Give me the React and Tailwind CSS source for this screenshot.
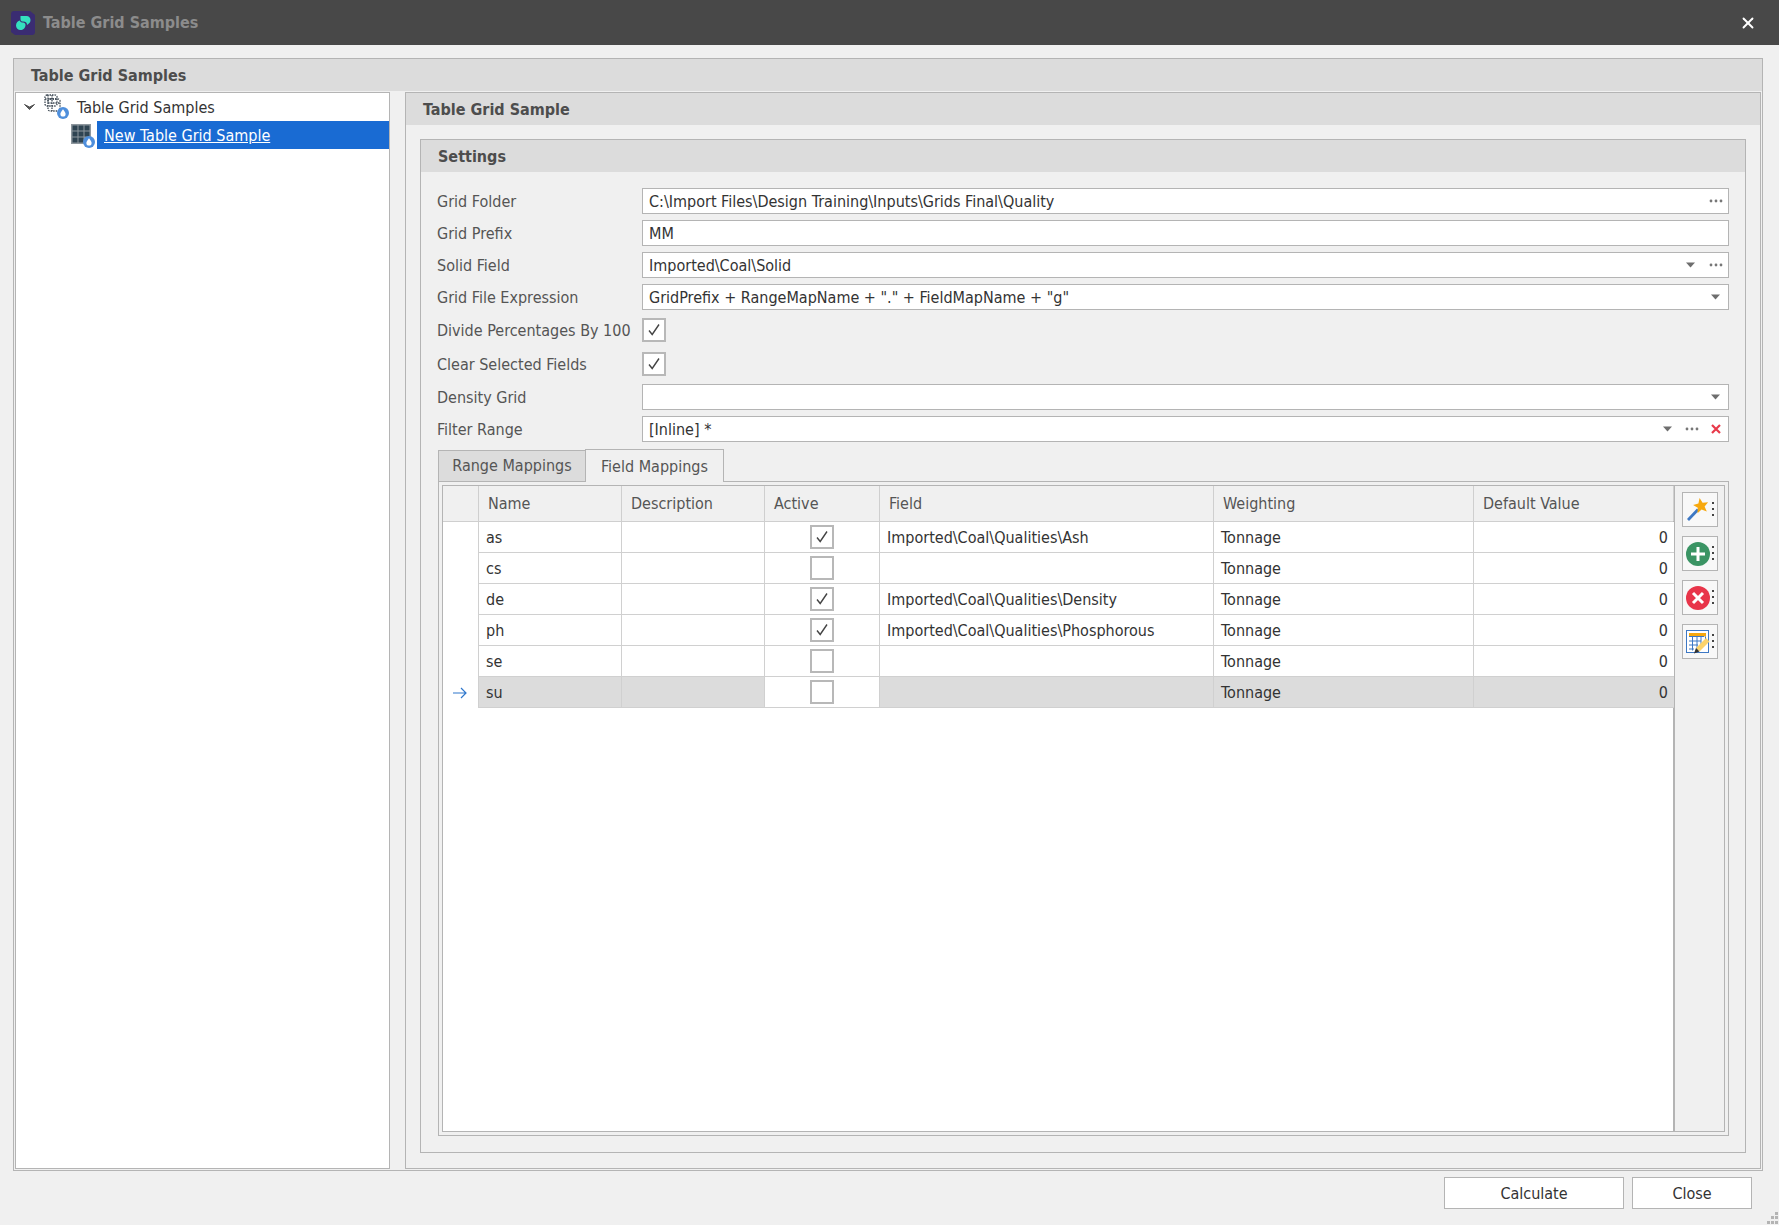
import { X } from "lucide-react"

const font = "font-['DejaVu_Sans_Condensed','DejaVu_Sans',sans-serif]"

function Dots() {
  return (
    <svg width="14" height="6" viewBox="0 0 14 6">
      <circle cx="2" cy="3" r="1.4" fill="#777" />
      <circle cx="7" cy="3" r="1.4" fill="#777" />
      <circle cx="12" cy="3" r="1.4" fill="#777" />
    </svg>
  )
}

function Caret() {
  return (
    <svg width="10" height="6" viewBox="0 0 10 6">
      <path d="M0 0.5h9L4.5 5.500z" fill="#6e6e6e" />
    </svg>
  )
}

function RedX() {
  return (
    <svg width="10" height="10" viewBox="0 0 10 10">
      <path d="M1 1l8 8M9 1l-8 8" stroke="#e8394a" strokeWidth="2.2" />
    </svg>
  )
}

function Drop({ x, y }) {
  return (
    <g transform={`translate(${x} ${y})`}>
      <circle cx="6" cy="6" r="6" fill="#4f8fdc" />
      <path d="M6 2.2C7.6 4.4 8.6 5.6 8.6 7a2.6 2.6 0 0 1-5.2 0C3.4 5.6 4.4 4.4 6 2.2z" fill="#fff" />
    </g>
  )
}

function DotGridIcon() {
  return (
    <svg width="26" height="26" viewBox="0 0 26 26">
      <g fill="none" stroke="#3f4a55" strokeWidth="1.300" strokeDasharray="1.500 1">
        <rect x="1" y="2" width="12" height="11" rx="2" />
        <rect x="4" y="6" width="12" height="12" rx="2" />
        <path d="M1 6h12M4 10h12M8 2v16M4 2v8" />
      </g>
      <Drop x={13} y={14} />
    </svg>
  )
}

function TableIcon() {
  return (
    <svg width="26" height="26" viewBox="0 0 26 26">
      <rect x="0" y="2" width="20" height="20" fill="#8e979e" />
      <g fill="#2f4452">
        <rect x="1.500" y="3.500" width="5" height="5" />
        <rect x="7.500" y="3.500" width="5" height="5" />
        <rect x="13.500" y="3.500" width="5" height="5" />
        <rect x="1.500" y="9.500" width="5" height="5" />
        <rect x="7.500" y="9.500" width="5" height="5" />
        <rect x="13.500" y="9.500" width="5" height="5" />
        <rect x="1.500" y="15.500" width="5" height="5" />
        <rect x="7.500" y="15.500" width="5" height="5" />
      </g>
      <Drop x={12} y={14} />
    </svg>
  )
}

function Logo() {
  return (
    <svg width="24" height="24" viewBox="0 0 24 24">
      <path d="M3 0h16l5 4v17a3 3 0 0 1-3 3H4l-4-3V3a3 3 0 0 1 3-3z" fill="#3a2c72" />
      <path d="M5 14.500C5 11.500 7 10 9 9.500c0 1.500 1.500 2 3 2 1.500 0 2.500 1 2.500 2.500 0 3-2.500 5-5 5S5 17 5 14.500z" fill="#34e0c0" />
      <path d="M9.500 5h6C18 5 19.500 7 19.500 9S18.500 12.500 16 14c0-2-1-3.500-4-3.500-1.500 0-2.500-.5-2.500-2.500z" fill="#34e0c0" />
    </svg>
  )
}

function Wand() {
  return (
    <svg width="24" height="24" viewBox="0 0 24 24">
      <path d="M2 22L12 11.500" stroke="#3d78c4" strokeWidth="2.800" />
      <path d="M13.600 0.100L16.600 4.800 22.100 4.200 18.600 8.500 20.800 13.600 15.600 11.500 11.500 15.200 11.800 9.700 7.100 6.900 12.400 5.500z" fill="#f7a80e" />
    </svg>
  )
}

function PlusIcon() {
  return (
    <svg width="24" height="24" viewBox="0 0 24 24">
      <circle cx="12" cy="12" r="12" fill="#3a9464" />
      <path d="M12 5v14M5 12h14" stroke="#fff" strokeWidth="3" />
    </svg>
  )
}

function CrossIcon() {
  return (
    <svg width="24" height="24" viewBox="0 0 24 24">
      <circle cx="12" cy="12" r="12" fill="#e8354a" />
      <path d="M7 7l10 10M17 7L7 17" stroke="#fff" strokeWidth="3" />
    </svg>
  )
}

function GridEdit() {
  return (
    <svg width="24" height="24" viewBox="0 0 24 24">
      <rect x="0.500" y="0.500" width="22" height="22" fill="#fff" stroke="#3d78c4" />
      <rect x="3" y="3" width="17" height="3.500" fill="#f7a80e" />
      <path d="M3 6.500h15M3 11h12M3 15h9M3 19h5M6.500 6.500v14M11 6.500v14M15 6.500v8M19.500 6.500v3" stroke="#3d78c4" strokeWidth="1" fill="none" />
      <path d="M10 18L20 8l3.500 3.500-10 10z" fill="#fbd36b" />
      <path d="M10 18l-2 5.500 5.500-2z" fill="#333" />
    </svg>
  )
}

function CheckMark() {
  return (
    <svg width="14" height="14" viewBox="0 0 14 14">
      <path d="M2 7.500l3.200 4L12 1.500" fill="none" stroke="#444" strokeWidth="1.400" />
    </svg>
  )
}

function CheckBox({ checked }) {
  return (
    <div className="w-[24px] h-[24px] bg-white border-2 border-[#b8b8b8] flex items-center justify-center">
      {checked && <CheckMark />}
    </div>
  )
}

function Field({ label, value, children }) {
  return (
    <div className="flex items-center h-[26px]">
      <div className="w-[205px] pt-[2px] text-[#555]">{label}</div>
      <div className="flex-1 h-[26px] bg-white border border-[#b4b4b4] flex items-center pl-[6px] pr-[5px] text-[#333]">
        <span className="flex-1 pt-[2px]">{value}</span>
        {children}
      </div>
    </div>
  )
}

function CheckRow({ label, className }) {
  return (
    <div className={`flex items-center h-[24px] ${className}`}>
      <div className="w-[205px] pt-[2px] text-[#555]">{label}</div>
      <CheckBox checked />
    </div>
  )
}

const cols = "grid grid-cols-[36px_143px_143px_115px_334px_260px_200px]"

const rows = [
  { name: "as", active: true, field: "Imported\\Coal\\Qualities\\Ash" },
  { name: "cs", active: false, field: "" },
  { name: "de", active: true, field: "Imported\\Coal\\Qualities\\Density" },
  { name: "ph", active: true, field: "Imported\\Coal\\Qualities\\Phosphorous" },
  { name: "se", active: false, field: "" },
  { name: "su", active: false, field: "", current: true },
]

function HeadCell({ children }) {
  return <div className="border-r border-[#cfcfcf] pl-[9px] flex items-center text-[#555]">{children}</div>
}

function GridRow({ row }) {
  const cell = "h-[31px] pt-[2px] border-r border-b border-[#d0d0d0] flex items-center text-[#333] " + (row.current ? "bg-[#dcdcdc]" : "bg-white")
  return (
    <div className={cols}>
      <div className="h-[31px] bg-white flex items-center justify-center border-r border-[#d0d0d0] pr-[2px]">
        {row.current && (
          <svg width="14" height="12" viewBox="0 0 14 12">
            <path d="M0 6h13M8 1l5 5-5 5" fill="none" stroke="#2f77cc" strokeWidth="1.200" />
          </svg>
        )}
      </div>
      <div className={cell + " pl-[7px]"}>{row.name}</div>
      <div className={cell}></div>
      <div className="h-[31px] border-r border-b border-[#d0d0d0] bg-white flex items-center justify-center pr-[1px]">
        <CheckBox checked={row.active} />
      </div>
      <div className={cell + " pl-[7px]"}>{row.field}</div>
      <div className={cell + " pl-[7px]"}>Tonnage</div>
      <div className={cell + " justify-end pr-[6px] !border-r-0"}>0</div>
    </div>
  )
}

function SideButton({ children }) {
  return (
    <div className="w-[36px] h-[35px] bg-[#f8f8f8] border border-[#b4b4b4] flex items-center pl-[3px] relative">
      {children}
      <div className="absolute right-[3px] top-[9px] flex flex-col gap-[4px]">
        <div className="w-[2px] h-[2px] bg-[#444]"></div>
        <div className="w-[2px] h-[2px] bg-[#444]"></div>
        <div className="w-[2px] h-[2px] bg-[#444]"></div>
      </div>
    </div>
  )
}

export default function App() {
  return (
    <div className={`w-[1779px] h-[1225px] bg-[#f0f0f0] flex flex-col overflow-hidden text-[16px] leading-none ${font}`}>
      {/* title bar */}
      <div className="h-[45px] shrink-0 bg-[#484848] flex items-center pl-[11px] pr-[22px]">
        <Logo />
        <div className="ml-[8px] flex-1 font-bold text-[#8c8c8c]">Table Grid Samples</div>
        <X size={18} strokeWidth={2.5} className="text-white" />
      </div>

      <div className="flex-1 flex flex-col pt-[13px] pl-[13px] pr-[16px]">
        <div className="h-[1113px] border border-[#b4b4b4] flex flex-col">
          <div className="h-[32px] pt-[2px] shrink-0 bg-[#dcdcdc] flex items-center pl-[17px] font-bold text-[#4d4d4d]">
            Table Grid Samples
          </div>

          <div className="flex-1 flex min-h-0">
            {/* tree */}
            <div className="w-[375px] ml-[1px] mt-[1px] mb-[1px] border border-[#b4b4b4] bg-white shrink-0">
              <div className="h-[28px] flex items-center text-[#333]">
                <svg width="11" height="7" viewBox="0 0 11 7" className="ml-[8px]">
                  <path d="M0.500 0.500L5.500 5.500 10.500 0.500 5.500 3z" fill="#555" stroke="#555" />
                </svg>
                <div className="ml-[9px] -mt-[2px]">
                  <DotGridIcon />
                </div>
                <span className="ml-[7px] pt-[2px]">Table Grid Samples</span>
              </div>
              <div className="h-[28px] flex items-center">
                <div className="ml-[55px]">
                  <TableIcon />
                </div>
                <div className="h-[28px] pt-[2px] flex-1 bg-[#196bd3] text-white underline flex items-center pl-[7px]">
                  New Table Grid Sample
                </div>
              </div>
            </div>

            {/* right side */}
            <div className="flex-1 ml-[15px] mr-[1px] mb-[1px] mt-[1px] border border-[#b4b4b4] flex flex-col min-w-0">
              <div className="h-[32px] pt-[2px] shrink-0 bg-[#dcdcdc] flex items-center pl-[17px] font-bold text-[#4d4d4d]">
                Table Grid Sample
              </div>

              <div className="flex-1 mx-[14px] mt-[14px] mb-[15px] border border-[#b4b4b4] flex flex-col min-h-0">
                <div className="h-[32px] pt-[2px] shrink-0 bg-[#dcdcdc] flex items-center pl-[17px] font-bold text-[#4d4d4d]">
                  Settings
                </div>

                <div className="flex-1 flex flex-col pt-[16px] pl-[16px] pr-[16px] pb-[16px] min-h-0">
                  <div className="flex flex-col gap-[6px]">
                    <Field label="Grid Folder" value="C:\Import Files\Design Training\Inputs\Grids Final\Quality">
                      <Dots />
                    </Field>
                    <Field label="Grid Prefix" value="MM" />
                    <Field label="Solid Field" value="Imported\Coal\Solid">
                      <Caret />
                      <div className="w-[13px]"></div>
                      <Dots />
                    </Field>
                    <Field label="Grid File Expression" value={'GridPrefix + RangeMapName + "." + FieldMapName + "g"'}>
                      <div className="pr-[2px]"><Caret /></div>
                    </Field>
                  </div>
                  <CheckRow label="Divide Percentages By 100" className="mt-[8px]" />
                  <CheckRow label="Clear Selected Fields" className="mt-[10px]" />
                  <div className="flex flex-col gap-[6px] mt-[8px]">
                    <Field label="Density Grid" value="">
                      <div className="pr-[2px]"><Caret /></div>
                    </Field>
                    <Field label="Filter Range" value="[Inline] *">
                      <Caret />
                      <div className="w-[12px]"></div>
                      <Dots />
                      <div className="w-[12px]"></div>
                      <div className="pr-[2px]"><RedX /></div>
                    </Field>
                  </div>

                  {/* tabs */}
                  <div className="flex items-end h-[33px] mt-[7px] ml-[1px] relative z-10 -mb-px">
                    <div className="w-[148px] h-[32px] bg-[#dcdcdc] border border-[#b4b4b4] flex items-center justify-center text-[#555]">
                      Range Mappings
                    </div>
                    <div className="w-[139px] h-[33px] pt-[1px] -ml-px bg-[#f0f0f0] border border-b-0 border-[#b4b4b4] flex items-center justify-center text-[#555]">
                      Field Mappings
                    </div>
                  </div>
                  <div className="flex-1 ml-[1px] border border-[#b4b4b4] p-[3px] min-h-0">
                    <div className="h-full border border-[#b4b4b4] flex">
                      <div className="w-[1232px] bg-white flex flex-col border-r-2 border-[#b4b4b4] shrink-0">
                        <div className={`${cols} h-[36px] bg-[#f0f0f0] border-b border-[#cfcfcf]`}>
                          <HeadCell></HeadCell>
                          <HeadCell>Name</HeadCell>
                          <HeadCell>Description</HeadCell>
                          <HeadCell>Active</HeadCell>
                          <HeadCell>Field</HeadCell>
                          <HeadCell>Weighting</HeadCell>
                          <HeadCell>Default Value</HeadCell>
                        </div>
                        {rows.map((r) => (
                          <GridRow key={r.name} row={r} />
                        ))}
                      </div>
                      <div className="flex-1 flex flex-col items-center gap-[9px] pt-[6px]">
                        <SideButton><Wand /></SideButton>
                        <SideButton><PlusIcon /></SideButton>
                        <SideButton><CrossIcon /></SideButton>
                        <SideButton><GridEdit /></SideButton>
                      </div>
                    </div>
                  </div>
                </div>
              </div>
            </div>
          </div>
        </div>

        {/* bottom buttons */}
        <div className="flex justify-end gap-[8px] mt-[6px] pr-[11px]">
          <div className="w-[180px] h-[32px] pt-[2px] bg-white border border-[#b4b4b4] flex items-center justify-center text-[#333]">Calculate</div>
          <div className="w-[120px] h-[32px] pt-[2px] bg-white border border-[#b4b4b4] flex items-center justify-center text-[#333]">Close</div>
        </div>
      </div>

      <div className="absolute left-[1766px] top-[1212px]">
        <svg width="13" height="13" viewBox="0 0 13 13" fill="#b4b4b4">
          <rect x="9" y="0" width="3" height="3" />
          <rect x="5" y="4" width="3" height="3" />
          <rect x="9" y="4" width="3" height="3" />
          <rect x="1" y="9" width="3" height="3" />
          <rect x="5" y="9" width="3" height="3" />
          <rect x="9" y="9" width="3" height="3" />
        </svg>
      </div>
    </div>
  )
}
